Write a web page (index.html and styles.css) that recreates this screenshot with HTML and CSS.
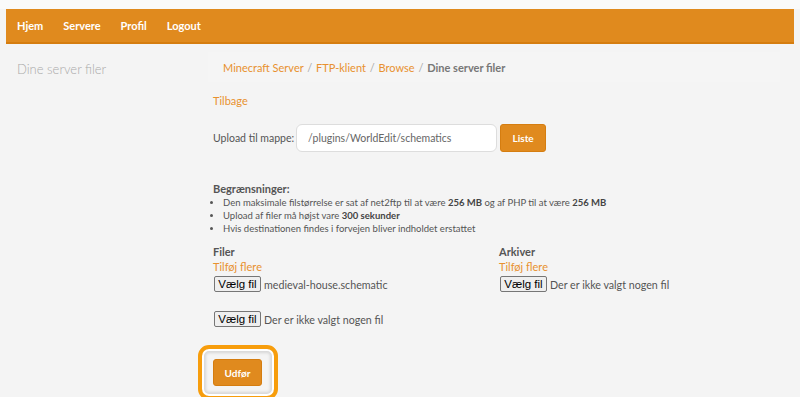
FILE: index.html
```html
<!DOCTYPE html>
<html lang="da">
<head>
    <meta charset="UTF-8">
    <meta name="viewport" content="width=device-width, initial-scale=1.0">
    <title>FTP-klient | Dine server filer</title>
    <link rel="stylesheet" href="styles.css">
</head>
<body>
    <div class="page">
        <nav class="navbar">
            <a href="#" class="nav-link">Hjem</a>
            <a href="#" class="nav-link">Servere</a>
            <a href="#" class="nav-link">Profil</a>
            <a href="#" class="nav-link">Logout</a>
        </nav>

        <div class="layout">
            <aside class="sidebar">Dine server filer</aside>

            <main class="main">
                <div class="breadcrumb">
                    <a href="#">Minecraft Server</a>
                    <span class="sep">/</span>
                    <a href="#">FTP-klient</a>
                    <span class="sep">/</span>
                    <a href="#">Browse</a>
                    <span class="sep">/</span>
                    <span class="current">Dine server filer</span>
                </div>

                <a href="#" class="back-link">Tilbage</a>

                <div class="upload-row">
                    <label class="upload-label">Upload til mappe:</label>
                    <input class="dir-input" type="text" value="/plugins/WorldEdit/schematics">
                    <button class="btn">Liste</button>
                </div>

                <div class="limits">
                    <h4>Begrænsninger:</h4>
                    <ul>
                        <li>Den maksimale filstørrelse er sat af net2ftp til at være <b>256 MB</b> og af PHP til at være <b>256 MB</b></li>
                        <li>Upload af filer må højst vare <b>300 sekunder</b></li>
                        <li>Hvis destinationen findes i forvejen bliver indholdet erstattet</li>
                    </ul>
                </div>

                <div class="files">
                    <div class="file-col">
                        <h4>Filer</h4>
                        <a href="#" class="add-more">Tilføj flere</a>
                        <div class="file-field">
                            <button class="file-btn">Vælg fil</button>
                            <span class="file-name">medieval-house.schematic</span>
                        </div>
                        <div class="file-field spaced">
                            <button class="file-btn">Vælg fil</button>
                            <span class="file-name">Der er ikke valgt nogen fil</span>
                        </div>
                    </div>
                    <div class="file-col">
                        <h4>Arkiver</h4>
                        <a href="#" class="add-more">Tilføj flere</a>
                        <div class="file-field">
                            <button class="file-btn">Vælg fil</button>
                            <span class="file-name">Der er ikke valgt nogen fil</span>
                        </div>
                    </div>
                </div>

                <div class="submit-ring">
                    <button class="btn btn-submit">Udfør</button>
                </div>
            </main>
        </div>
    </div>
</body>
</html>
```

FILE: styles.css
```css
:root {
    --orange: #e08a1e;
    --orange-dark: #d57d10;
    --link: #e8912f;
    --bg: #f4f4f4;
    --text: #555555;
    --muted: #aaaaaa;
}

body {
    margin: 0;
    background: var(--bg);
    font-family: Lato, "Open Sans", sans-serif;
    color: var(--text);
    overflow: hidden;
}

a {
    color: var(--link);
    text-decoration: none;
}

.page {
    padding: 9px 6px 0;
    background: linear-gradient(#fafafa 0, #fafafa 9px, var(--bg) 9px);
}

.navbar {
    display: flex;
    height: 33px;
    align-items: center;
    padding: 0 11px;
    background: var(--orange);
    border-bottom: 2px solid var(--orange-dark);
}

.nav-link {
    color: #fff;
    font-size: 11px;
    font-weight: 700;
    margin-right: 20px;
}

.layout {
    display: grid;
    grid-template-columns: 207px 1fr;
}

.sidebar {
    padding: 17px 11px;
    font-size: 13px;
    font-weight: 300;
    color: var(--muted);
}

.main {
    padding-top: 8px;
    padding-right: 14px;
}

.breadcrumb {
    margin-left: -5px;
    padding: 8px 15px 6px;
    line-height: 16px;
    font-size: 11px;
    background: #f5f5f5;
    color: #aaa;
}

.breadcrumb .sep {
    margin: 0 1px;
}

.breadcrumb .current {
    color: #777;
    font-weight: 700;
}

.back-link {
    display: block;
    margin-top: 12px;
    font-size: 11px;
    line-height: 14px;
}

.upload-row {
    display: flex;
    align-items: center;
    margin-top: 16px;
}

.upload-label {
    font-size: 10.5px;
    margin-right: 2px;
}

.dir-input {
    box-sizing: border-box;
    width: 201px;
    height: 28px;
    padding: 0 0 0 11px;
    border: 1px solid #ddd;
    border-radius: 6px;
    background: #fff;
    font-family: Lato, sans-serif;
    font-size: 10.5px;
    color: #666;
}

.btn {
    box-sizing: border-box;
    background: var(--orange);
    border: 1px solid var(--orange-dark);
    border-radius: 3px;
    color: #fff;
    font-family: Lato, sans-serif;
    font-size: 10px;
    font-weight: 700;
    height: 28px;
    width: 46px;
    padding: 0;
    margin-left: 3px;
}

.limits {
    margin-top: 30px;
}

h4 {
    margin: 0;
    font-size: 11px;
    line-height: 14px;
    font-weight: 700;
    color: #555;
}

.limits ul {
    margin: 0;
    padding-left: 10px;
    font-size: 9.5px;
    line-height: 13px;
}

.limits b {
    color: #444;
}

.files {
    display: grid;
    grid-template-columns: 286px 1fr;
    margin-top: 10px;
}

.add-more {
    display: block;
    font-size: 11px;
    line-height: 14px;
    margin-top: 1px;
}

.file-field {
    display: flex;
    align-items: center;
    height: 16px;
    margin-top: 2px;
}

.file-field.spaced {
    margin-top: 19px;
}

.file-btn {
    box-sizing: border-box;
    font-family: Arial, "Liberation Sans", sans-serif;
    font-size: 11.5px;
    height: 16px;
    width: 47px;
    padding: 0;
    margin-left: 1px;
    background: #efefef;
    border: 1px solid #767676;
    border-radius: 2px;
    color: #000;
}

.file-name {
    margin-left: 3px;
    font-size: 10.7px;
    color: #555;
}

.submit-ring {
    display: inline-block;
    margin: 18px 0 0 -15px;
    padding: 10px 12px 10px 11px;
    border: 4px solid #f79d0c;
    border-radius: 11px;
    box-shadow: inset 0 0 0 2px #fff, inset 0 0 3px 4px rgba(0, 0, 0, 0.12);
}

.btn-submit {
    height: 27px;
    width: 49px;
    margin: 0;
}
```
